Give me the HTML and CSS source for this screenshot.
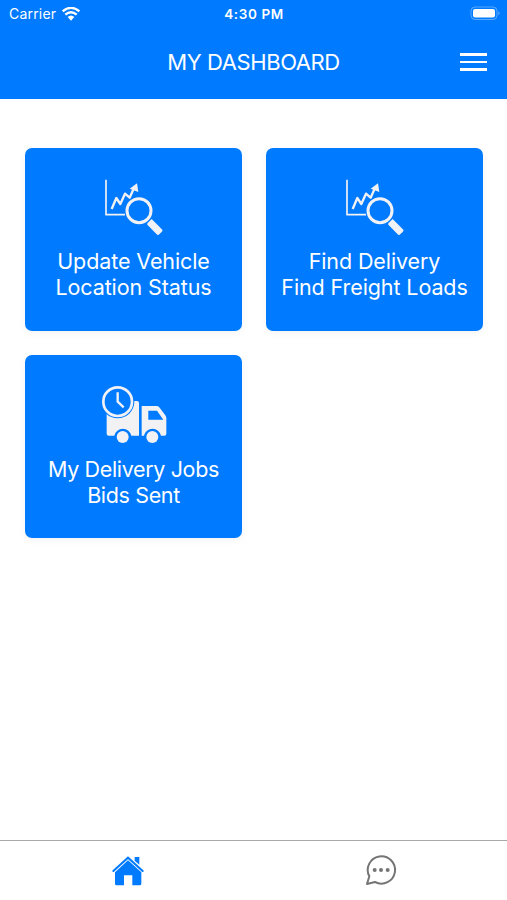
FILE: index.html
```
<!DOCTYPE html>
<html lang="en">
<head>
  <meta charset="UTF-8">
  <meta name="viewport" content="width=device-width, initial-scale=1.0">
  <title>My Dashboard</title>
  <link rel="stylesheet" href="styles.css">
</head>
<body>
  <header class="header">
    <div class="status-bar">
      <div class="carrier">
        <span>Carrier</span>
        <svg class="wifi" viewBox="0 0 54 42">
          <path d="M2 13 Q27 -8 52 13" />
          <path d="M10 23 Q27 8 44 23" />
          <path class="dot" d="M17 30 Q27 21 37 30 L27 41 Z" />
        </svg>
      </div>
      <span class="time">4:30 PM</span>
      <div class="battery">
        <svg width="31" height="15" viewBox="0 0 31 15">
          <rect x="1" y="1" width="26" height="12.5" rx="4" fill="none" stroke="#fff" stroke-opacity="0.35" />
          <rect x="3" y="3" width="22" height="8.5" rx="2" fill="#fff" />
          <path d="M28.4 5.2 Q31 7.2 28.4 9.2 Z" fill="#fff" fill-opacity="0.4" />
        </svg>
      </div>
    </div>
    <div class="title-bar">
      <h1>MY DASHBOARD</h1>
      <button class="menu" aria-label="Menu">
        <span></span>
        <span></span>
        <span></span>
      </button>
    </div>
  </header>

  <main class="cards">
    <a class="card" href="#">
      <svg class="card-icon" viewBox="0 0 261 225">
        <path class="line" stroke-width="5" d="M48 29 V134 H105" />
        <path class="line" stroke-width="7" d="M65 117 L79 84 L91 102 L105 71 L119 83 L132 54" />
        <path class="fill" d="M119 56 L141 40 L145 66 Z" />
        <circle class="line" stroke-width="9" cx="147" cy="122" r="36" />
        <path class="fill" d="M172 160 L185 147 L217 179 Q219 182 215 186 L206 194 Q203 196 200 193 L172 164 Z" />
      </svg>
      <span>Update Vehicle<br>Location Status</span>
    </a>
    <a class="card" href="#">
      <svg class="card-icon" viewBox="0 0 261 225">
        <path class="line" stroke-width="5" d="M48 29 V134 H105" />
        <path class="line" stroke-width="7" d="M65 117 L79 84 L91 102 L105 71 L119 83 L132 54" />
        <path class="fill" d="M119 56 L141 40 L145 66 Z" />
        <circle class="line" stroke-width="9" cx="147" cy="122" r="36" />
        <path class="fill" d="M172 160 L185 147 L217 179 Q219 182 215 186 L206 194 Q203 196 200 193 L172 164 Z" />
      </svg>
      <span>Find Delivery<br>Find Freight Loads</span>
    </a>
    <a class="card jobs" href="#">
      <svg class="card-icon" viewBox="0 6 261 225">
        <path class="fill" d="M50 112 H100 L125 78 H141 Q147 78 147 84 V182 H124 A26 26 0 0 0 73 182 H56 Q50 182 50 176 Z" />
        <path class="fill" d="M155 93 H201 Q206 93 209 98 L226 121 Q229 125 229 130 V176 Q229 182 223 182 H213 A26 26 0 0 0 162 182 H155 Z" />
        <path class="hole" d="M175 107 H201 L220 134 H175 Z" />
        <circle class="fill" cx="98" cy="186" r="18" />
        <circle class="fill" cx="187" cy="186" r="18" />
        <circle class="hole" cx="83" cy="80" r="50" />
        <circle class="line" stroke-width="8" cx="83" cy="80" r="43" />
        <path class="line" stroke-width="7" d="M83 52 V80 L101 97" />
      </svg>
      <span>My Delivery Jobs<br>Bids Sent</span>
    </a>
  </main>

  <nav class="tabs">
    <a class="tab" href="#" aria-label="Home">
      <svg width="34" height="34" viewBox="0 0 102 102">
        <path d="M7 54 L51 14 L95 54" fill="none" stroke="#007aff" stroke-width="6" stroke-linecap="round" />
        <path d="M71 12 H85 V35 L71 23 Z" fill="#007aff" />
        <path d="M51 22 L91 58 V92 Q91 97 86 97 H64 V67 H39 V97 H17 Q12 97 12 92 V58 Z" fill="#007aff" />
      </svg>
    </a>
    <a class="tab" href="#" aria-label="Messages">
      <svg width="34" height="34" viewBox="0 0 102 102">
        <path d="M16 70 A41 41 0 1 1 33 87 L9 93 Z" fill="none" stroke="#757575" stroke-width="6" stroke-linejoin="round" />
        <circle cx="32" cy="51" r="6" fill="#757575" />
        <circle cx="51" cy="51" r="6" fill="#757575" />
        <circle cx="71" cy="51" r="6" fill="#757575" />
      </svg>
    </a>
  </nav>
</body>
</html>
```
FILE: styles.css
```
* {
  box-sizing: border-box;
}
body {
  margin: 0;
  height: 100vh;
  display: flex;
  flex-direction: column;
  background-color: #fff;
  font-family: Inter, "Liberation Sans", sans-serif;
  overflow: hidden;
}
.header {
  height: 98.5px;
  background-color: #007aff;
  color: #fff;
}
.status-bar {
  display: grid;
  grid-template-columns: 1fr auto 1fr;
  align-items: center;
  height: 27px;
  padding: 0 6px 0 9px;
  font-size: 14px;
}
.carrier {
  display: flex;
  align-items: center;
  gap: 6px;
  letter-spacing: 0.2px;
}
.wifi {
  width: 18px;
  height: 14px;
  fill: none;
  stroke: #fff;
  stroke-width: 7px;
}
.wifi .dot {
  fill: #fff;
  stroke: none;
}
.time {
  padding-right: 2px;
  font-size: 13.5px;
  font-weight: 600;
  letter-spacing: 0.6px;
}
.battery {
  display: flex;
  justify-content: flex-end;
}
.title-bar {
  display: grid;
  grid-template-columns: 1fr auto 1fr;
  align-items: center;
  height: 70px;
  padding: 0 20px;
}
h1 {
  grid-column: 2;
  margin: 0;
  font-size: 22px;
  font-weight: 400;
  letter-spacing: -0.4px;
}
.menu {
  justify-self: end;
  display: flex;
  flex-direction: column;
  gap: 5px;
  width: 27px;
  padding: 0;
  border: none;
  background: none;
}
.menu span {
  height: 2.5px;
  background-color: #fff;
}
.cards {
  flex: 1;
  display: grid;
  grid-template-columns: 217px 217px;
  grid-auto-rows: 183px;
  gap: 24.5px 24px;
  padding: 49px 25px 0;
}
.card {
  display: flex;
  flex-direction: column;
  align-items: center;
  gap: 3.5px;
  padding-top: 22px;
  border-radius: 7px;
  background-color: #007aff;
  box-shadow: 0 2px 8px rgba(0, 0, 0, 0.05);
  color: #fff;
  font-size: 21.5px;
  line-height: 26px;
  letter-spacing: -0.1px;
  text-align: center;
  text-decoration: none;
}
.jobs {
  letter-spacing: -0.35px;
}
.card-icon {
  width: 87px;
  height: 75px;
}
.fill {
  fill: #f2f2f5;
}
.line {
  fill: none;
  stroke: #f2f2f5;
  stroke-linejoin: round;
}
.hole {
  fill: #007aff;
}
.tabs {
  display: flex;
  height: 60px;
  padding: 0 0 2px 1px;
  border-top: 1px solid #a8a8a8;
}
.tab {
  flex: 1;
  display: flex;
  align-items: center;
  justify-content: center;
}
```
